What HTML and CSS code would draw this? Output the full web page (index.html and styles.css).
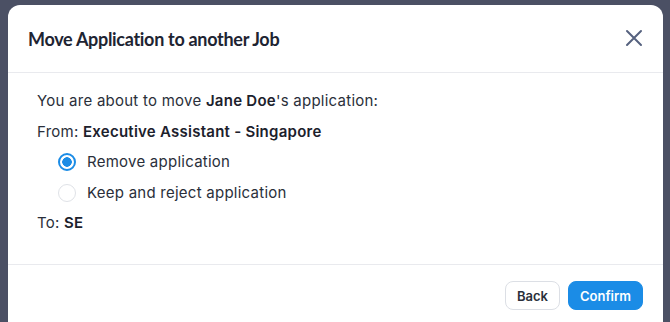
FILE: index.html
```html
<!DOCTYPE html>
<html>
<head>
<meta charset="utf-8">
<link rel="stylesheet" href="styles.css">
</head>
<body>
<div class="backdrop">
  <div class="modal">
    <div class="modal-header">
      <h2 class="title">Move Application to another Job</h2>
      <button class="close" aria-label="Close">
        <svg width="18" height="18" viewBox="0 0 18 18"><path d="M2 2 L16 16 M16 2 L2 16" stroke="#56627f" stroke-width="2" stroke-linecap="round" fill="none"/></svg>
      </button>
    </div>
    <div class="modal-body">
      <p class="line">You are about to move <b>Jane Doe</b>'s application:</p>
      <p class="line">From: <b>Executive Assistant - Singapore</b></p>
      <label class="radio-row"><span class="radio checked"></span>Remove application</label>
      <label class="radio-row"><span class="radio"></span>Keep and reject application</label>
      <p class="line">To: <b>SE</b></p>
    </div>
    <div class="modal-footer">
      <button class="btn btn-back">Back</button>
      <button class="btn btn-confirm">Confirm</button>
    </div>
  </div>
</div>
</body>
</html>
```
FILE: styles.css
```css
html, body {
  margin: 0;
  padding: 0;
  height: 100%;
  overflow: hidden;
}
body {
  background: #4b5064;
  font-family: Inter, "Noto Sans", sans-serif;
}
.backdrop {
  padding: 5px 7px 0 8px;
}
.modal {
  background: #fff;
  border-radius: 12px;
  height: 330px;
  display: flex;
  flex-direction: column;
}
.modal-header {
  height: 67px;
  display: flex;
  align-items: center;
  justify-content: space-between;
  padding: 0 20px 0 20px;
  border-bottom: 1px solid #e9eaee;
}
.title {
  margin: 0;
  font-family: Lato, Inter, sans-serif;
  font-size: 18px;
  font-weight: 700;
  color: #1e2432;
  letter-spacing: -0.3px;
}
.close {
  background: none;
  border: 0;
  padding: 0;
  width: 18px;
  height: 18px;
  margin-top: -2px;
  cursor: pointer;
}
.modal-body {
  height: 192px;
  padding: 18px 29px 0;
  box-sizing: border-box;
  border-bottom: 1px solid #e9eaee;
  color: #2a2f3a;
  font-size: 15px;
  letter-spacing: 0.25px;
}
.line {
  margin: 0;
  height: 30.5px;
  line-height: 20px;
}
.line b {
  font-weight: 600;
  color: #1c212c;
}
.radio-row {
  display: flex;
  align-items: flex-start;
  height: 30.5px;
  line-height: 20px;
  padding-left: 21px;
}
.radio {
  width: 18px;
  height: 18px;
  border: 1px solid #dfe2e7;
  border-radius: 50%;
  margin: 1px 11px 0 0;
  box-sizing: border-box;
  flex: none;
}
.radio.checked {
  border: 2px solid #1b8ce6;
  background: radial-gradient(circle, #1b8ce6 0 4.5px, #fff 5px);
}
.modal-footer {
  display: flex;
  justify-content: flex-end;
  gap: 8px;
  padding: 16px 20px 0;
}
.btn {
  height: 29px;
  border-radius: 8px;
  font-family: Inter, sans-serif;
  font-size: 13px;
  font-weight: 600;
  padding: 0 11px;
  cursor: pointer;
}
.btn-back {
  background: #fff;
  border: 1px solid #dcdfe5;
  color: #2a2f3a;
}
.btn-confirm {
  background: #1b8ce6;
  border: 1px solid #1b8ce6;
  color: #fff;
  padding: 0 11px;
}
```
